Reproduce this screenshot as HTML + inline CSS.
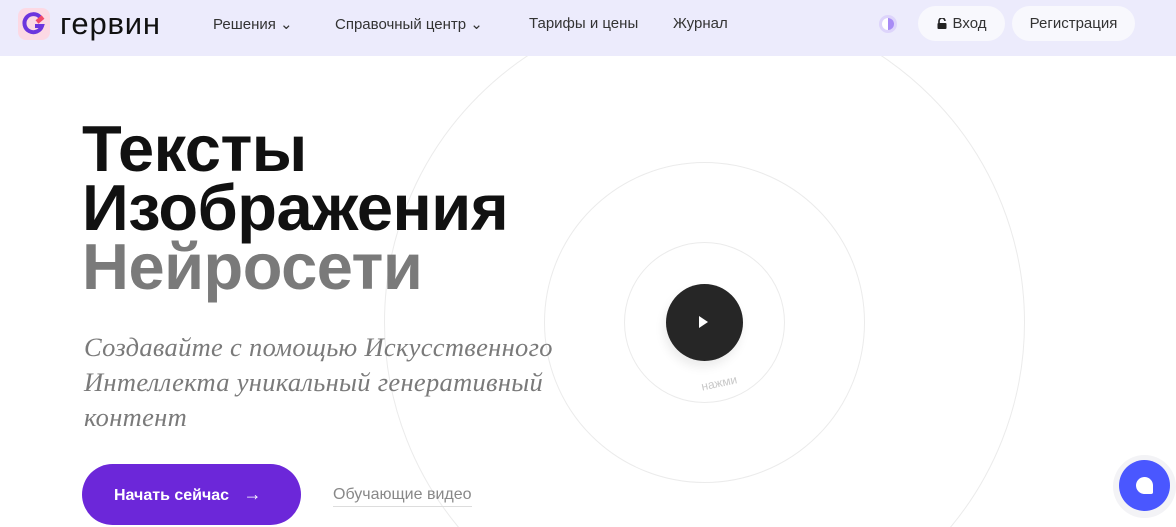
<!DOCTYPE html>
<html style="width:1176px;height:527px;overflow:hidden"><head><meta charset="utf-8"><style>
*{margin:0;padding:0;box-sizing:border-box}
body{width:1176px;height:527px;overflow:hidden;background:#fff;font-family:"Liberation Sans","DejaVu Sans",sans-serif;position:relative}
#w{position:absolute;left:0;top:0;width:1176px;height:527px;overflow:hidden}
.hdr{position:absolute;left:0;top:0;width:1176px;height:56px;background:#ecebfc}
.nav{position:absolute;top:15px;font-size:15px;color:#333}
.btn{position:absolute;top:6px;height:35px;border-radius:18px;background:#f8f8fd;font-size:15px;color:#333;line-height:35px;text-align:center}
.h{position:absolute;left:82px;font-size:65px;font-weight:bold;letter-spacing:-0.5px;color:#111;line-height:70px}
.sub{position:absolute;left:84px;font-family:"Liberation Serif","DejaVu Serif",serif;font-style:italic;font-size:26.5px;color:#7a7a7a;line-height:35px;top:330px;letter-spacing:0.3px}
.c{position:absolute;border-radius:50%;border:1px solid #ebebeb}
</style></head><body><div id="w">
<div class="c" style="left:384px;top:2px;width:641px;height:641px"></div>
<div class="c" style="left:544px;top:162px;width:321px;height:321px"></div>
<div class="c" style="left:624px;top:242px;width:161px;height:161px"></div>
<div style="position:absolute;left:666px;top:284px;width:77px;height:77px;border-radius:50%;background:#262626;box-shadow:-2px 6px 10px rgba(0,0,0,0.08)"></div>
<svg style="position:absolute;left:698px;top:316px" width="12" height="12"><path d="M1 0 L10 6 L1 12Z" fill="#fff"/></svg>
<div style="position:absolute;left:701px;top:376px;font-size:12px;color:#c8c8c8;transform:rotate(-12deg)">нажми</div>

<div class="hdr"></div>
<svg style="position:absolute;left:18px;top:8px" width="32" height="32" viewBox="0 0 32 32"><rect width="32" height="32" rx="8" fill="#fcd9e4"/><path d="M22 9 A9 9 0 1 0 24 18 L17 18" fill="none" stroke="#6c35de" stroke-width="4"/><path d="M19 14 L25 9" stroke="#f24b6a" stroke-width="4.5"/></svg>
<div style="position:absolute;left:60px;top:6px;font-size:31px;color:#111;letter-spacing:0.8px">гервин</div>
<div class="nav" style="left:213px">Решения ⌄</div>
<div class="nav" style="left:335px">Справочный центр ⌄</div>
<div class="nav" style="left:529px">Тарифы и цены</div>
<div class="nav" style="left:673px">Журнал</div>
<div style="position:absolute;left:879px;top:15px;width:18px;height:18px;border-radius:50%;background:#ddd4fb"></div>
<div style="position:absolute;left:882px;top:18px;width:12px;height:12px;border-radius:50%;background:linear-gradient(90deg,#fff 50%,#a88cf5 50%)"></div>
<div class="btn" style="left:918px;width:87px"><svg width="10" height="11" viewBox="0 0 10 11" style="vertical-align:-1px;margin-right:6px"><path d="M2 5 V3 A3 3 0 0 1 8 3" fill="none" stroke="#222" stroke-width="1.6"/><rect x="0.5" y="5" width="9" height="6" rx="1" fill="#222"/></svg>Вход</div>
<div class="btn" style="left:1012px;width:123px">Регистрация</div>

<div class="h" style="top:114px">Тексты</div>
<div class="h" style="top:173px">Изображения</div>
<div class="h" style="top:232px;color:#7a7a7a">Нейросети</div>
<div class="sub">Создавайте с помощью Искусственного<br>Интеллекта уникальный генеративный<br>контент</div>
<div style="position:absolute;left:82px;top:464px;width:219px;height:61px;border-radius:31px;background:#6c27d9;color:#fff;font-size:16px;font-weight:bold;line-height:61px;padding-left:32px">Начать сейчас <span style="font-weight:normal;margin-left:10px;font-size:18px">→</span></div>
<div style="position:absolute;left:333px;top:486px;font-size:16px;color:#888;border-bottom:1px solid #ddd;padding-bottom:2px">Обучающие видео</div>
<div style="position:absolute;left:1113px;top:455px;width:63px;height:63px;border-radius:50%;background:#f3f3f6"></div>
<div style="position:absolute;left:1119px;top:460px;width:51px;height:51px;border-radius:50%;background:#4a57ff"></div>
<div style="position:absolute;left:1136px;top:477px;width:17px;height:17px;border-radius:9px 9px 2px 9px;background:#fff"></div>
</div></body></html>
